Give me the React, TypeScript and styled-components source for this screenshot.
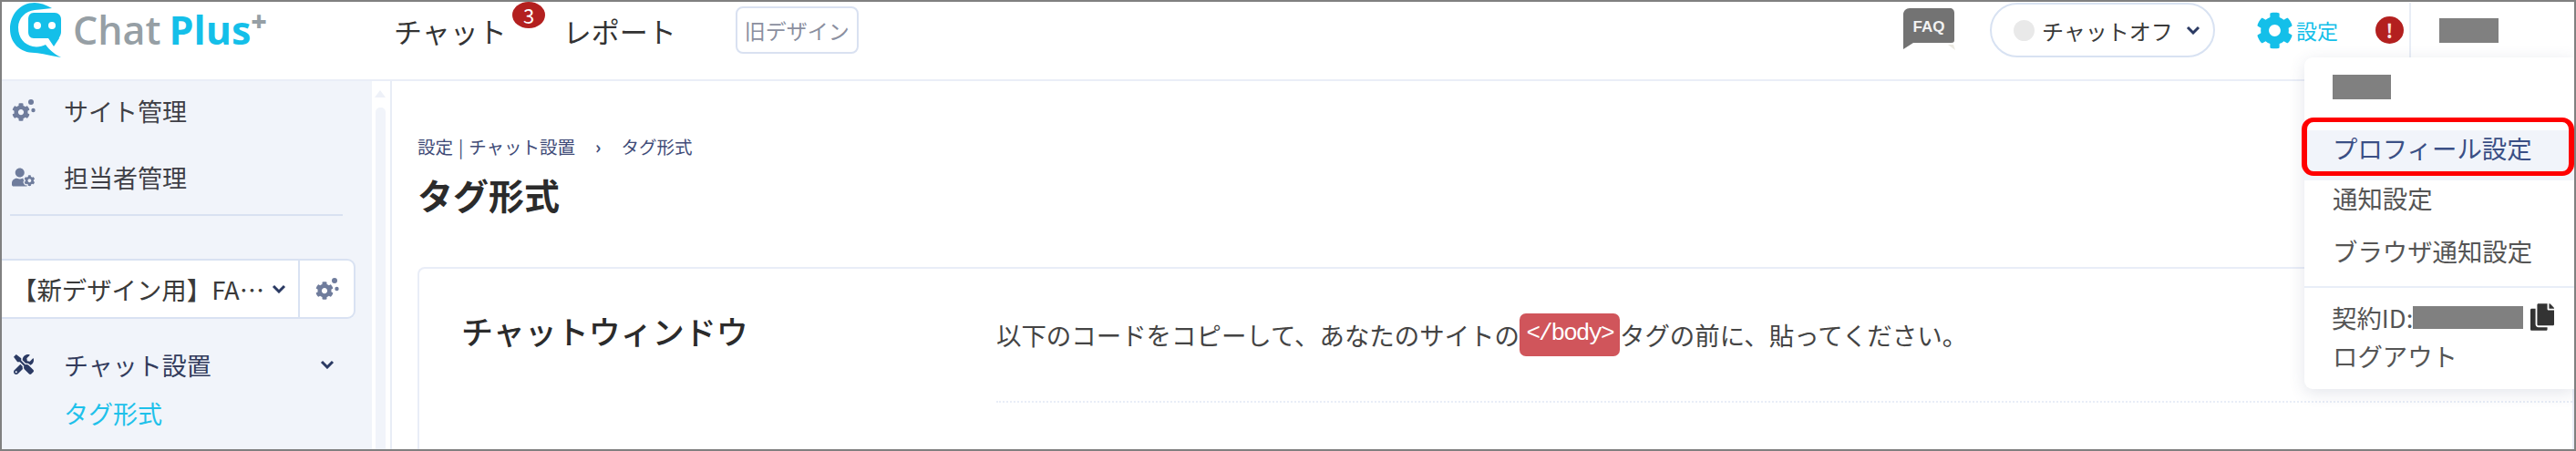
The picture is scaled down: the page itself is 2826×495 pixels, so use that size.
import React from "react";
import styled, { createGlobalStyle } from "styled-components";
import { FaCog, FaCopy, FaTools, FaUserCog } from "react-icons/fa";

const GlobalStyle = createGlobalStyle`
  html, body { margin: 0; padding: 0; background: #fff; }
  * { box-sizing: border-box; }
  body { font-family: "Noto Sans CJK JP", "Noto Sans", sans-serif; color: #444; }
`;

const Frame = styled.div`
  position: relative;
  width: 2826px;
  height: 495px;
  border: 2px solid #808080;
  overflow: hidden;
  background: #fff;
  display: flex;
  flex-direction: column;
`;

const Header = styled.header`
  height: 87px;
  flex: none;
  display: flex;
  align-items: flex-start;
  padding-top: 1px;
  border-bottom: 2px solid #eaeef7;
`;

const LogoBox = styled.div`
  width: 430px;
  height: 60px;
  flex: none;
  display: flex;
  align-items: center;
  padding-left: 9px;
`;

const LogoText = styled.div`
  margin-left: 11px;
  font-family: "Open Sans", "Noto Sans", sans-serif;
  font-size: 43px;
  line-height: 60px;
  font-weight: 600;
  color: #969fa5;
  white-space: nowrap;
`;

const LogoPlus = styled.span`
  color: #14bfe9;
  font-weight: 700;
  margin-left: 9px;
`;

const LogoSup = styled.sup`
  color: #969fa5;
  font-size: 30px;
  font-weight: 800;
  line-height: 0;
  vertical-align: 15px;
`;

const NavItem = styled.div`
  position: relative;
  height: 60px;
  display: flex;
  align-items: center;
  font-size: 31px;
  color: #333;
  white-space: nowrap;
  margin-right: 62px;
`;

const CountBadge = styled.span`
  position: absolute;
  left: 130px;
  top: -1px;
  width: 36px;
  height: 29px;
  border-radius: 50%;
  background: #b3201f;
  color: #fff;
  font-size: 22px;
  line-height: 28px;
  text-align: center;
`;

const OldDesign = styled.div`
  margin: 4px 0 0 3px;
  width: 135px;
  height: 52px;
  border: 2px solid #d9e1f1;
  border-radius: 8px;
  display: flex;
  align-items: center;
  justify-content: center;
  font-size: 23px;
  color: #8b8f9f;
  white-space: nowrap;
`;

const HeaderRight = styled.div`
  margin-left: auto;
  height: 60px;
  display: flex;
  align-items: center;
`;

const FaqIcon = styled.svg`
  width: 60px;
  height: 46px;
  flex: none;
  margin-top: -2px;
`;

const StatusPill = styled.div`
  margin-left: 36px;
  width: 247px;
  height: 60px;
  border: 2px solid #d8e2f2;
  border-radius: 30px;
  display: flex;
  align-items: center;
  padding-left: 24px;
  font-size: 24px;
  color: #3a3a3a;
  white-space: nowrap;
`;

const StatusDot = styled.span`
  width: 23px;
  height: 23px;
  border-radius: 50%;
  background: #e9e9e9;
  margin-right: 8px;
  flex: none;
`;

const Chevron = styled.svg<{ $left?: number }>`
  width: 16px;
  height: 10px;
  flex: none;
  margin-left: ${(p) => p.$left ?? 0}px;
`;

const SettingLink = styled.div`
  margin-left: 45px;
  display: flex;
  align-items: center;
  color: #14bfe9;
  font-size: 23px;
  white-space: nowrap;
  svg { width: 41px; height: 41px; margin-right: 3px; flex: none; }
`;

const AlertDot = styled.span`
  margin-left: 41px;
  width: 31px;
  height: 30px;
  flex: none;
  border-radius: 50%;
  background: #b3201f;
  color: #fbe4e4;
  font-size: 21px;
  font-weight: 700;
  line-height: 30px;
  text-align: center;
`;

const UserBox = styled.div`
  margin-left: 6px;
  width: 180px;
  height: 60px;
  border-left: 2px solid #e8edf6;
  display: flex;
  align-items: center;
  padding-left: 31px;
  margin-right: 1px;
`;

const Mask = styled.span<{ $w: number; $h: number }>`
  display: block;
  width: ${(p) => p.$w}px;
  height: ${(p) => p.$h}px;
  background: #808080;
  flex: none;
`;

const Body = styled.div`
  flex: 1;
  min-height: 0;
  display: flex;
`;

const Sidebar = styled.aside`
  width: 406px;
  flex: none;
  background: #f1f4fa;
  padding-top: 2px;
  display: flex;
  flex-direction: column;
`;

const SideItem = styled.div`
  height: 60px;
  display: flex;
  align-items: center;
  padding-left: 11px;
  font-size: 27px;
  color: #3f3f46;
  white-space: nowrap;
  & + & { margin-top: 13px; }
`;

const SideIcon = styled.span<{ $dark?: boolean }>`
  width: 57px;
  flex: none;
  display: flex;
  align-items: center;
  color: ${(p) => (p.$dark ? "#2b3a63" : "#6f7c9c")};
  svg { display: block; }
`;

const SideDivider = styled.hr`
  margin: 11px 0 0 9px;
  width: 365px;
  height: 2px;
  border: 0;
  background: #d9e1f1;
`;

const SiteSelect = styled.div`
  margin-top: 47px;
  width: 388px;
  height: 66px;
  display: flex;
  background: #fff;
  border: 2px solid #d9e2f2;
  border-left: 0;
  border-radius: 0 9px 9px 0;
`;

const SiteName = styled.div`
  flex: 1;
  min-width: 0;
  display: flex;
  align-items: center;
  padding-left: 11px;
  font-size: 27.4px;
  color: #3a3a3a;
  border-right: 2px solid #d9e2f2;
  white-space: nowrap;
`;

const SiteGear = styled.div`
  width: 59px;
  flex: none;
  display: flex;
  align-items: center;
  justify-content: center;
  color: #6f7c9c;
`;

const GroupItem = styled.div`
  margin-top: 20px;
  height: 60px;
  display: flex;
  align-items: center;
  padding-left: 13px;
  font-size: 27px;
  color: #333c5c;
  white-space: nowrap;
`;

const GroupIcon = styled(SideIcon)`
  width: 55px;
`;

const GroupLabel = styled.span`
  flex: 1;
`;

const ChevronGap = styled.span`
  width: 41px;
  flex: none;
`;

const SubItem = styled.div`
  height: 46px;
  display: flex;
  align-items: center;
  padding-left: 68px;
  font-size: 27px;
  color: #1fc1ea;
`;

const ScrollTrack = styled.div`
  width: 22px;
  flex: none;
  border-right: 2px solid #e8edf6;
  display: flex;
  flex-direction: column;
  align-items: center;
  padding: 10px 2px 0 0;
`;

const ScrollArrow = styled.span`
  width: 0;
  height: 0;
  border-left: 6px solid transparent;
  border-right: 6px solid transparent;
  border-bottom: 8px solid #eef1f8;
`;

const ScrollThumb = styled.div`
  margin-top: 11px;
  width: 11px;
  flex: 1;
  background: #f1f4fa;
  border-radius: 5px 5px 0 0;
`;

const Main = styled.main`
  flex: 1;
  min-width: 0;
  padding: 59px 0 0 28px;
`;

const Breadcrumb = styled.div`
  height: 24px;
  display: flex;
  align-items: center;
  font-size: 19.5px;
  color: #414c78;
  white-space: nowrap;
`;

const CrumbSep = styled.span`
  margin: 0 6px;
`;

const CrumbArrow = styled.span`
  margin: 0 22px;
  font-weight: 700;
`;

const PageTitle = styled.h1`
  margin: 13px 0 0;
  height: 56px;
  font-size: 39px;
  line-height: 56px;
  font-weight: 700;
  color: #2b2b2b;
  white-space: nowrap;
`;

const Card = styled.section`
  margin-top: 52px;
  height: 220px;
  border: 2px solid #e9edf7;
  border-bottom: 0;
  border-radius: 8px 0 0 0;
  display: flex;
  padding: 43px 0 0 46px;
`;

const CardTitle = styled.h2`
  margin: 0;
  width: 587px;
  flex: none;
  font-size: 35px;
  line-height: 50px;
  font-weight: 500;
  color: #2b2b2b;
  white-space: nowrap;
`;

const CardContent = styled.div`
  flex: 1;
  min-width: 0;
`;

const Description = styled.p`
  margin: 0;
  height: 104px;
  padding-top: 6px;
  display: flex;
  align-items: flex-start;
  font-size: 27.45px;
  line-height: 47px;
  color: #444;
  white-space: nowrap;
  border-bottom: 2px dotted #e8edf7;
`;

const CodeTag = styled.code`
  display: inline-block;
  height: 47px;
  width: 110px;
  border-radius: 7px;
  background: #d0555b;
  color: #fff;
  font-family: "Liberation Mono", monospace;
  font-size: 26px;
  letter-spacing: -2px;
  line-height: 45px;
  text-align: center;
`;

const Menu = styled.div`
  position: absolute;
  left: 2526px;
  top: 61px;
  width: 296px;
  height: 364px;
  background: #fff;
  border-radius: 9px 0 0 9px;
  box-shadow: 0 4px 18px rgba(60, 70, 110, 0.14);
  display: flex;
  flex-direction: column;
  font-size: 27.4px;
  color: #555;
`;

const MenuHead = styled.div`
  height: 80px;
  flex: none;
  padding: 19px 0 0 31px;
`;

const MenuRow = styled.div<{ $active?: boolean; $h: number }>`
  height: ${(p) => p.$h}px;
  flex: none;
  line-height: 38px;
  padding-left: 31px;
  white-space: nowrap;
  color: ${(p) => (p.$active ? "#3a4f85" : "#555")};
  background: ${(p) => (p.$active ? "#f1f4fa" : "transparent")};
`;

const MenuDivider = styled.hr`
  margin: 11px 0 0;
  height: 2px;
  flex: none;
  border: 0;
  background: #e8eef8;
`;

const IdRow = styled.div`
  margin-top: 14px;
  height: 36px;
  flex: none;
  display: flex;
  align-items: center;
  padding-left: 30px;
  white-space: nowrap;
`;

const CopyIcon = styled.span`
  margin-left: 8px;
  color: #333;
  display: flex;
  svg { width: 26px; height: 30px; display: block; }
`;

const LogoutRow = styled.div`
  margin-top: 3px;
  height: 41px;
  flex: none;
  display: flex;
  align-items: center;
  padding-left: 31px;
`;

const Highlight = styled.div`
  position: absolute;
  left: 2523px;
  top: 127px;
  width: 299px;
  height: 64px;
  border: 5px solid #ff0000;
  border-width: 5px 6px;
  border-radius: 13px;
  pointer-events: none;
`;

const Logo = () => (
  <svg width="58" height="60" viewBox="0 0 58 60" aria-hidden="true">
    <g fill="#14bfe9" transform="translate(-11 -3)">
      <path d="M57 9 C50 5 44 3 38 3 C22 3 11 16 11 32 C11 47 22 58 38 58 C46 58.5 55 61 67 63 C59 59 54 54.5 50 49 C46 51 41 52 36 51 C27 49 20 42 20 30 C20 20 28 12 38 11 C45 10 51 10 57 9 Z" />
      <path fillRule="evenodd" d="M37 14 H60 C64 14 67 17 67 21 V35 C67 39 64 42 65 42 L59 51 L53 42 H37 C33 42 31 39 31 35 V21 C31 17 33 14 37 14 Z M41 24 A4 4 0 1 0 41 32 A4 4 0 1 0 41 24 Z M57 24 A4 4 0 1 0 57 32 A4 4 0 1 0 57 24 Z" />
    </g>
  </svg>
);

const Gears = ({ size }: { size: number }) => (
  <svg width={size} height={size} viewBox="0 0 26 26" fill="currentColor" aria-hidden="true">
    <svg x="0" y="5" width="20" height="20" viewBox="0 0 512 512">
      <path d="M487.4 315.7l-42.6-24.6c4.3-23.2 4.3-47 0-70.2l42.6-24.6c4.9-2.8 7.1-8.6 5.5-14-11.1-35.6-30-67.8-54.7-94.6-3.8-4.1-10-5.1-14.8-2.3L380.8 110c-17.9-15.4-38.5-27.3-60.8-35.1V25.8c0-5.6-3.9-10.5-9.4-11.7-36.7-8.2-74.3-7.8-109.2 0-5.5 1.2-9.4 6.1-9.4 11.7V75c-22.2 7.9-42.8 19.8-60.8 35.1L88.7 85.5c-4.9-2.8-11-1.9-14.8 2.3-24.7 26.7-43.6 58.9-54.7 94.6-1.7 5.4.6 11.2 5.5 14L67.3 221c-4.3 23.2-4.3 47 0 70.2l-42.6 24.6c-4.9 2.8-7.1 8.6-5.5 14 11.1 35.6 30 67.8 54.7 94.6 3.8 4.1 10 5.1 14.8 2.3l42.6-24.6c17.9 15.4 38.5 27.3 60.8 35.1v49.2c0 5.6 3.9 10.5 9.4 11.7 36.7 8.2 74.3 7.8 109.2 0 5.5-1.2 9.4-6.1 9.4-11.7v-49.2c22.2-7.9 42.8-19.8 60.8-35.1l42.6 24.6c4.9 2.8 11 1.9 14.8-2.3 24.7-26.7 43.6-58.9 54.7-94.6 1.5-5.5-.7-11.3-5.6-14.1zM256 336c-44.1 0-80-35.9-80-80s35.9-80 80-80 80 35.9 80 80-35.9 80-80 80z" />
    </svg>
    <circle cx="21" cy="4" r="3" />
    <circle cx="23.5" cy="13" r="2.2" />
  </svg>
);

const ChevronDown = ({ left }: { left?: number }) => (
  <Chevron $left={left} viewBox="0 0 16 10" aria-hidden="true">
    <path d="M2 2 L8 8 L14 2" fill="none" stroke="#2b3a63" strokeWidth="3" />
  </Chevron>
);

export default function App() {
  return (
    <>
      <GlobalStyle />
      <Frame lang="ja">
        <Header>
          <LogoBox>
            <Logo />
            <LogoText>
              Chat<LogoPlus>Plus</LogoPlus>
              <LogoSup>+</LogoSup>
            </LogoText>
          </LogoBox>
          <NavItem>
            チャット
            <CountBadge>3</CountBadge>
          </NavItem>
          <NavItem>レポート</NavItem>
          <OldDesign>旧デザイン</OldDesign>
          <HeaderRight>
            <FaqIcon viewBox="0 0 60 46" aria-hidden="true">
              <path d="M8 40 H56 L58 46 L50 40 Z" fill="#eceae2" />
              <path d="M8 0 H52 C55 0 57 2 57 5 V35 C57 38 55 38 52 38 H12 L1 45 V7 C1 3 4 0 8 0 Z" fill="#737373" />
              <text x="29" y="26" fontFamily="Liberation Sans, sans-serif" fontSize="17" fontWeight="700" fill="#f2f2f2" textAnchor="middle">FAQ</text>
            </FaqIcon>
            <StatusPill>
              <StatusDot />
              チャットオフ
              <ChevronDown left={14} />
            </StatusPill>
            <SettingLink>
              <FaCog />
              設定
            </SettingLink>
            <AlertDot>!</AlertDot>
            <UserBox>
              <Mask $w={65} $h={27} />
            </UserBox>
          </HeaderRight>
        </Header>
        <Body>
          <Sidebar>
            <SideItem>
              <SideIcon><Gears size={26} /></SideIcon>
              サイト管理
            </SideItem>
            <SideItem>
              <SideIcon><FaUserCog size={25} /></SideIcon>
              担当者管理
            </SideItem>
            <SideDivider />
            <SiteSelect>
              <SiteName>
                【新デザイン用】FA…
                <ChevronDown left={8} />
              </SiteName>
              <SiteGear><Gears size={26} /></SiteGear>
            </SiteSelect>
            <GroupItem>
              <GroupIcon $dark><FaTools size={22} /></GroupIcon>
              <GroupLabel>チャット設置</GroupLabel>
              <ChevronDown />
              <ChevronGap />
            </GroupItem>
            <SubItem>タグ形式</SubItem>
          </Sidebar>
          <ScrollTrack>
            <ScrollArrow />
            <ScrollThumb />
          </ScrollTrack>
          <Main>
            <Breadcrumb>
              設定<CrumbSep>|</CrumbSep>チャット設置<CrumbArrow>›</CrumbArrow>タグ形式
            </Breadcrumb>
            <PageTitle>タグ形式</PageTitle>
            <Card>
              <CardTitle>チャットウィンドウ</CardTitle>
              <CardContent>
                <Description>
                  以下のコードをコピーして、あなたのサイトの
                  <CodeTag>&lt;/body&gt;</CodeTag>
                  タグの前に、貼ってください。
                </Description>
              </CardContent>
            </Card>
          </Main>
        </Body>
        <Menu>
          <MenuHead><Mask $w={64} $h={27} /></MenuHead>
          <MenuRow $active $h={55}>プロフィール設定</MenuRow>
          <MenuRow $h={58}>通知設定</MenuRow>
          <MenuRow $h={47}>ブラウザ通知設定</MenuRow>
          <MenuDivider />
          <IdRow>
            契約ID:
            <Mask $w={121} $h={25} />
            <CopyIcon><FaCopy /></CopyIcon>
          </IdRow>
          <LogoutRow>ログアウト</LogoutRow>
        </Menu>
        <Highlight />
      </Frame>
    </>
  );
}
